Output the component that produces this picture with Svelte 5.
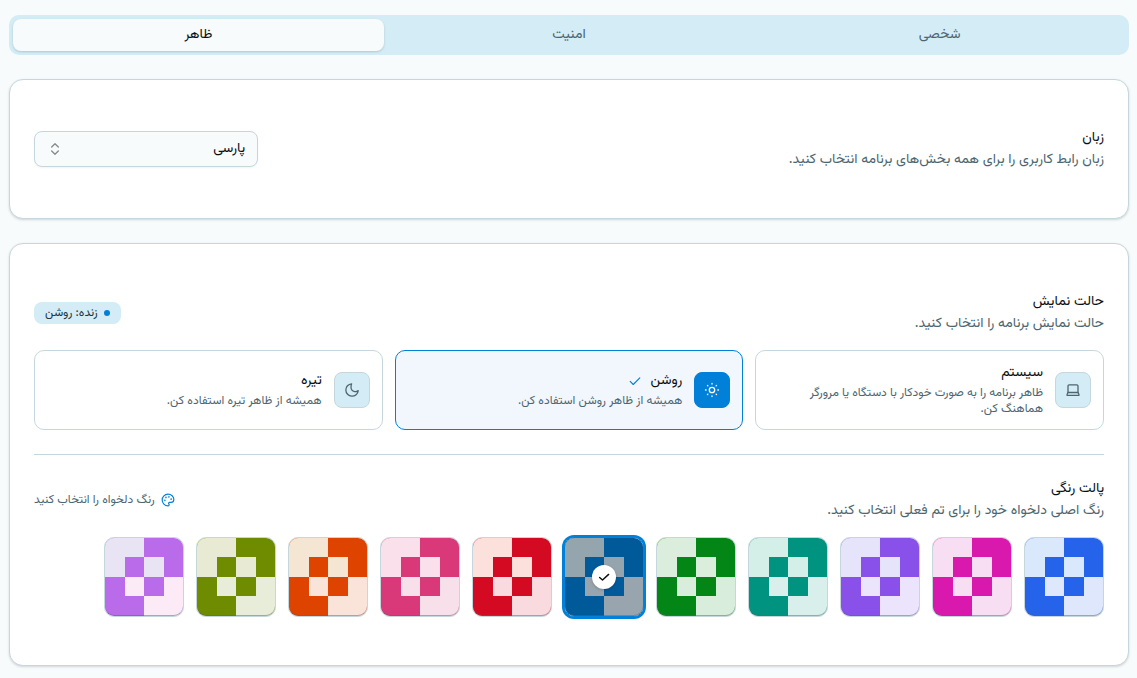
<script lang="ts">
  const tabs = [
    { id: 'personal', label: 'شخصی' },
    { id: 'security', label: 'امنیت' },
    { id: 'appearance', label: 'ظاهر' },
  ];

  const modes = [
    { id: 'system', label: 'سیستم', text: 'ظاهر برنامه را به صورت خودکار با دستگاه یا مرورگر هماهنگ کن.' },
    { id: 'light', label: 'روشن', text: 'همیشه از ظاهر روشن استفاده کن.' },
    { id: 'dark', label: 'تیره', text: 'همیشه از ظاهر تیره استفاده کن.' },
  ];

  // main colour, then the two tints next to it
  const palettes = [
    { id: 'blue', main: '#2563eb', top: '#d9e9fb', bottom: '#dfe7fd' },
    { id: 'magenta', main: '#d919ad', top: '#f7def3', bottom: '#f7def3' },
    { id: 'violet', main: '#8950ea', top: '#e5e4fb', bottom: '#ece4fc' },
    { id: 'teal', main: '#009480', top: '#d4efe7', bottom: '#d9efeb' },
    { id: 'green', main: '#038616', top: '#dbeedd', bottom: '#d9eddd' },
    { id: 'ocean', main: '#005a9a', top: '#94a5ae', bottom: '#98a5af' },
    { id: 'red', main: '#d30a22', top: '#fbe0dc', bottom: '#f9dade' },
    { id: 'pink', main: '#d93978', top: '#f9e0ea', bottom: '#f8e0ea' },
    { id: 'orange', main: '#de4300', top: '#f5e6d4', bottom: '#fae4da' },
    { id: 'olive', main: '#6f8b00', top: '#e8ead4', bottom: '#e8edd9' },
    { id: 'lilac', main: '#b96bea', top: '#e8e4f4', bottom: '#fdeaf7' },
  ];

  let tab = $state('appearance');
  let language = $state('fa');
  let mode = $state('light');
  let palette = $state('ocean');
</script>

<main dir="rtl" lang="fa">
  <nav class="tabs">
    {#each tabs as t}
      <button class:active={tab === t.id} onclick={() => (tab = t.id)}>{t.label}</button>
    {/each}
  </nav>

  <section class="card">
    <div class="head">
      <div>
        <h2><label for="language">زبان</label></h2>
        <p>زبان رابط کاربری را برای همه بخش‌های برنامه انتخاب کنید.</p>
      </div>
      <div class="select">
        <select id="language" bind:value={language}>
          <option value="fa">پارسی</option>
        </select>
        <svg width="16" height="16" viewBox="0 0 24 24" aria-hidden="true">
          <path d="m7 15 5 5 5-5M7 9l5-5 5 5" />
        </svg>
      </div>
    </div>
  </section>

  <section class="card">
    <div class="head">
      <div>
        <h2>حالت نمایش</h2>
        <p>حالت نمایش برنامه را انتخاب کنید.</p>
      </div>
      <span class="badge"><i></i>زنده: روشن</span>
    </div>

    <div class="modes">
      {#each modes as m}
        <button class="mode" class:active={mode === m.id} aria-pressed={mode === m.id} onclick={() => (mode = m.id)}>
          <span class="icon">
            <svg width="16" height="16" viewBox="0 0 16 16" aria-hidden="true">
              {#if m.id === 'system'}
                <path d="M3 10.5V4a1.2 1.2 0 0 1 1.2-1.2h7.6A1.2 1.2 0 0 1 13 4v6.5" />
                <path d="M3 10.5h10l1 2a.6.6 0 0 1-.6.9H2.600a.6.6 0 0 1-.6-.9z" />
              {:else if m.id === 'light'}
                <circle cx="8" cy="8" r="2.700" />
                <path d="M8 1.500v.6M8 13.900v.6M1.500 8h.6M13.900 8h.6M3.500 3.500l.4.4M12.100 12.100l.4.4M3.500 12.500l.4-.4M12.100 3.900l.4-.4" />
              {:else}
                <path d="M7.600 1.800a6.200 6.200 0 1 0 6.600 6.800c-1 .9-2.300 1.300-3.600 1A4.600 4.600 0 0 1 7 5.200c0-1.200.2-2.400.6-3.400Z" />
              {/if}
            </svg>
          </span>
          <span class="copy">
            <strong>
              {m.label}
              {#if mode === m.id}
                <svg width="14" height="14" viewBox="0 0 16 16" aria-hidden="true"><path d="m2.500 8.500 3.500 3.500 7.500-7.500" /></svg>
              {/if}
            </strong>
            <small>{m.text}</small>
          </span>
        </button>
      {/each}
    </div>

    <hr />

    <div class="head">
      <div>
        <h2>پالت رنگی</h2>
        <p>رنگ اصلی دلخواه خود را برای تم فعلی انتخاب کنید.</p>
      </div>
      <span class="hint">
        <svg width="14" height="14" viewBox="0 0 24 24" aria-hidden="true">
          <path d="M12 22a1 1 0 0 1 0-20 10 9 0 0 1 10 9 5 5 0 0 1-5 5h-2.25a1.75 1.75 0 0 0-1.4 2.8l.3.4a1.75 1.75 0 0 1-1.4 2.8z" />
          <circle cx="13.5" cy="6.5" r=".5" />
          <circle cx="17.5" cy="10.5" r=".5" />
          <circle cx="6.5" cy="12.5" r=".5" />
          <circle cx="8.5" cy="7.5" r=".5" />
        </svg>
        رنگ دلخواه را انتخاب کنید
      </span>
    </div>

    <div class="palettes">
      {#each palettes as p}
        <button
          class="swatch"
          class:active={palette === p.id}
          aria-label={p.id}
          aria-pressed={palette === p.id}
          onclick={() => (palette = p.id)}
        >
          <svg class="tiles" viewBox="0 0 78 78" aria-hidden="true">
            <rect width="78" height="78" fill={p.main} />
            <rect width="39" height="39" fill={p.top} />
            <rect x="39" y="39" width="39" height="39" fill={p.bottom} />
            <rect x="20" y="19" width="39" height="39" fill={p.main} />
            <rect x="39" y="19" width="20" height="20" fill={p.top} />
            <rect x="20" y="39" width="19" height="19" fill={p.bottom} />
          </svg>
          {#if palette === p.id}
            <span class="check">
              <svg width="14" height="14" viewBox="0 0 16 16" aria-hidden="true"><path d="m3 8.500 3.300 3 7-6.500" /></svg>
            </span>
          {/if}
        </button>
      {/each}
    </div>
  </section>
</main>

<style>
  :global(body) {
    margin: 0;
    background: #f7fbfc;
  }

  main {
    --blue: #0080d8;
    --sky: #d3ecf5;
    --line: #c5d7dc;
    --muted: #4c6670;
    display: flex;
    flex-direction: column;
    gap: 24px;
    padding: 15px 8px 12px 9px;
    color: #0b0f12;
    font: 14px/20px 'Vazirmatn', 'DejaVu Sans', sans-serif;
  }

  button,
  select {
    margin: 0;
    color: inherit;
    font: inherit;
    cursor: pointer;
  }

  svg {
    flex: none;
    fill: none;
    stroke: currentColor;
    stroke-width: 2;
    stroke-linecap: round;
    stroke-linejoin: round;
  }

  .tabs {
    display: grid;
    grid-template-columns: repeat(3, 1fr);
    padding: 4px;
    border-radius: 10px;
    background: var(--sky);
  }

  .tabs button {
    height: 32px;
    padding: 0 8px;
    border: 0;
    border-radius: 8px;
    background: none;
    color: var(--muted);
  }

  .tabs button.active {
    background: #f7fbfc;
    color: #0b0f12;
    box-shadow: 0 1px 3px rgba(0, 0, 0, 0.1), 0 1px 2px rgba(0, 0, 0, 0.06);
  }

  .card {
    padding: 48px 24px;
    border: 1px solid var(--line);
    border-radius: 14px;
    background: white;
    box-shadow: 0 1px 3px rgba(0, 0, 0, 0.1), 0 1px 2px rgba(0, 0, 0, 0.06);
  }

  .head {
    display: flex;
    justify-content: space-between;
    align-items: center;
    gap: 16px;
  }

  h2,
  p {
    margin: 0;
    font-size: 14px;
    font-weight: 400;
    line-height: 20px;
  }

  p {
    margin-top: 2px;
    color: var(--muted);
  }

  .select {
    position: relative;
    width: 224px;
  }

  select {
    display: block;
    width: 100%;
    height: 36px;
    padding: 0 12px;
    border: 1px solid var(--line);
    border-radius: 8px;
    background: #f7fbfc;
    appearance: none;
    box-shadow: 0 1px 2px rgba(0, 0, 0, 0.05);
  }

  .select svg {
    position: absolute;
    top: 10px;
    left: 13px;
    color: #858b8e;
    pointer-events: none;
  }

  .badge {
    display: flex;
    align-items: center;
    gap: 6px;
    height: 22px;
    padding: 0 11px;
    border-radius: 8px;
    background: var(--sky);
    color: #20363f;
    font-size: 12px;
  }

  .badge i {
    width: 6px;
    height: 6px;
    border-radius: 50%;
    background: var(--blue);
  }

  .modes {
    display: grid;
    grid-template-columns: repeat(3, 1fr);
    gap: 12px;
    margin-top: 16px;
  }

  .mode {
    display: flex;
    align-items: center;
    gap: 12px;
    min-height: 80px;
    padding: 12px;
    border: 1px solid var(--line);
    border-radius: 10px;
    background: white;
    text-align: start;
  }

  .mode.active {
    border-color: var(--blue);
    background: #f2f7fe;
  }

  .icon {
    display: flex;
    flex: none;
    justify-content: center;
    align-items: center;
    width: 34px;
    height: 34px;
    border: 1px solid var(--line);
    border-radius: 8px;
    background: var(--sky);
    color: var(--muted);
  }

  .mode svg {
    stroke-width: 1.3;
  }

  .active .icon {
    border-color: var(--blue);
    background: var(--blue);
    color: white;
  }

  .copy {
    flex: 1;
  }

  strong {
    display: flex;
    align-items: center;
    gap: 8px;
    font-weight: 400;
  }

  strong svg {
    color: var(--blue);
  }

  small {
    display: block;
    margin-top: 2px;
    color: var(--muted);
    font-size: 12px;
    line-height: 16px;
  }

  hr {
    height: 1px;
    margin: 24px 0;
    border: 0;
    background: var(--line);
  }

  .hint {
    display: flex;
    align-items: center;
    gap: 6px;
    color: var(--muted);
    font-size: 12px;
  }

  .hint svg {
    color: var(--blue);
  }

  .palettes {
    display: flex;
    flex-wrap: wrap;
    gap: 12px;
    margin-top: 16px;
  }

  .swatch {
    position: relative;
    width: 80px;
    height: 80px;
    padding: 0;
    overflow: hidden;
    border: 1px solid var(--line);
    border-radius: 10px;
    background: white;
  }

  .swatch::after {
    content: '';
    position: absolute;
    inset: 0;
    border-radius: 9px;
    box-shadow: inset 0 -1px 0 rgba(90, 100, 110, 0.5);
  }

  .swatch.active {
    border-color: var(--blue);
    box-shadow: 0 0 0 2px var(--blue);
  }

  .tiles {
    display: block;
    width: 100%;
    stroke: none;
    shape-rendering: crispEdges;
  }

  .check {
    position: absolute;
    inset: 0;
    display: flex;
    width: 24px;
    height: 24px;
    margin: auto;
    justify-content: center;
    align-items: center;
    border-radius: 50%;
    background: white;
    box-shadow: 0 1px 3px rgba(0, 0, 0, 0.2);
  }

  .check svg {
    stroke-width: 1.6;
  }
</style>
